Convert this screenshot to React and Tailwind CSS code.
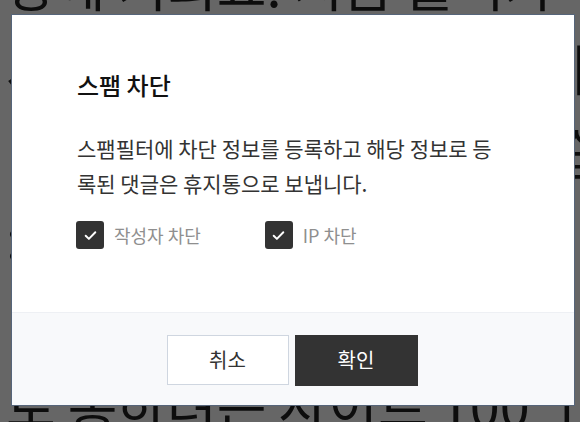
import { useState } from 'react'

const font = { fontFamily: '"Noto Sans CJK KR", "Noto Sans", sans-serif' }

function Check({ checked, onChange, label }) {
  return (
    <label className="flex items-center gap-[10px] cursor-pointer select-none">
      <button
        type="button"
        onClick={onChange}
        className={`w-[28px] h-[28px] rounded-[3px] flex items-center justify-center ${checked ? 'bg-[#333]' : 'bg-white border border-[#ccc]'}`}
      >
        {checked && (
          <svg width="15" height="15" viewBox="0 0 14 14" fill="none">
            <path d="M2.5 7.2l3 3 6-6.2" stroke="#fff" strokeWidth="1.8" strokeLinecap="round" strokeLinejoin="round" />
          </svg>
        )}
      </button>
      <span className="text-[18px] text-[#8f8f8f] leading-none">{label}</span>
    </label>
  )
}

export default function App() {
  const [writer, setWriter] = useState(true)
  const [ip, setIp] = useState(true)

  return (
    <div className="relative w-[580px] h-[422px] overflow-hidden bg-white" style={font}>
      {/* page behind the dialog */}
      <div className="pl-[6px] mt-[-58px] text-[54px] leading-[84px] text-[#222] whitespace-nowrap">
        <p>상에 기회요. 지금 들어가 주세요</p>
        <p>세요 테스트 하는 문장입니다</p>
        <p>ㄱ 처럼 보이는 문장이 있습니다</p>
        <p>: 이어지는 내용입니다</p>
        <p>ㅣ 계속해서 이어집니다</p>
        <p>로 통하려는 사이트 100 ㅣ</p>
      </div>
      <div className="absolute inset-0 bg-black/60" />

      <div className="absolute left-[11px] top-[14px] w-[564px] h-[392px] bg-white border border-[#56657a] flex flex-col">
        <div className="flex-1 px-[65px] pt-[58px]">
          <h2 className="text-[24px] font-medium text-[#111] leading-none">스팸 차단</h2>
          <p className="mt-[34px] text-[21px] leading-[35px] text-[#333]">
            스팸필터에 차단 정보를 등록하고 해당 정보로 등록된 댓글은 휴지통으로 보냅니다.
          </p>
          <div className="mt-[20px] flex items-center gap-[64px] -ml-[1px]">
            <Check checked={writer} onChange={() => setWriter(!writer)} label="작성자 차단" />
            <Check checked={ip} onChange={() => setIp(!ip)} label="IP 차단" />
          </div>
        </div>
        <div className="h-[93px] bg-[#f8f9fb] border-t border-[#eef0f4] flex items-center justify-center gap-[6px] pr-[2px] pt-[2px]">
          <button className="w-[122px] h-[50px] bg-white border border-[#cfd6e0] text-[20px] text-[#333]">
            취소
          </button>
          <button className="w-[123px] h-[51px] bg-[#333] text-[20px] text-white">
            확인
          </button>
        </div>
      </div>
    </div>
  )
}
